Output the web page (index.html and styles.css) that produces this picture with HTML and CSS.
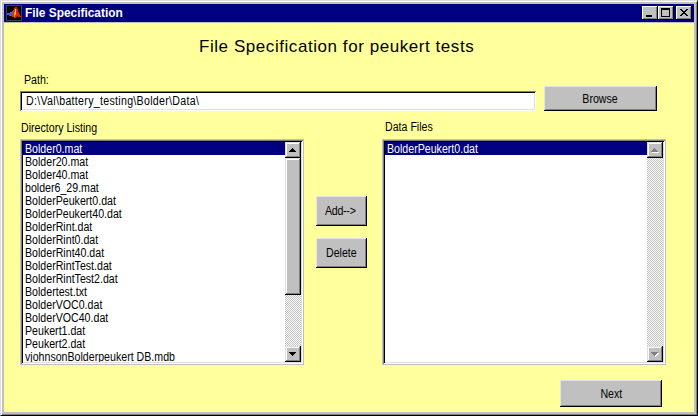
FILE: index.html
```html
<!DOCTYPE html>
<html lang="en">
<head>
<meta charset="utf-8">
<title>File Specification</title>
<link rel="stylesheet" href="styles.css">
</head>
<body>
<div class="window">
  <header class="titlebar">
    <svg class="app-icon" width="16" height="16" viewBox="0 0 16 16" shape-rendering="crispEdges">
      <rect width="16" height="16" fill="#000"/>
      <path d="M.5.5h15v15H.5z" fill="none" stroke="#404040"/>
      <path d="M1 8h3V7h2v3H5v1H3v-1H1z" fill="#4060d8"/>
      <path d="M5 7h1V6h1V5h1V3h1v5H8v2H7v1H5z" fill="#a04070"/>
      <path d="M8 3h1V2h2v2h1v3h1v2h1v2h1v1h-3v-1h-1v1h-1v1H8v-1H6v-1h1V9h1z" fill="#e02000"/>
      <path d="M8 7h1V4h1v6H9v2H8z" fill="#ff9000"/>
      <path d="M9 4h1v5H9z" fill="#ffe040"/>
    </svg>
    <h1 class="title"><span>File Specification</span></h1>
    <div class="controls">
      <div class="ctl"><svg width="16" height="14" shape-rendering="crispEdges"><path d="M4 9h6v2H4z"/></svg></div>
      <div class="ctl"><svg width="16" height="14" shape-rendering="crispEdges"><path fill-rule="evenodd" d="M3 2h9v9H3zM4 4v6h7V4z"/></svg></div>
      <div class="ctl close"><svg width="16" height="14" shape-rendering="crispEdges"><path d="M4 3h2v1h1v1h2V4h1V3h2v1h-1v1h-1v1H9v1h1v1h1v1h1v1h-2V9H9V8H7v1H6v1H4V9h1V8h1V7h1V6H6V5H5V4H4z"/></svg></div>
    </div>
  </header>
  <main class="form">
    <h2 class="heading"><span>File Specification for peukert tests</span></h2>
    <div class="path-row">
      <div class="path-group">
        <div class="label path-label"><span class="txt">Path:</span></div>
        <div class="field"><span class="txt">D:\Val\battery_testing\Bolder\Data\</span></div>
      </div>
      <div class="btn browse"><span class="txt">Browse</span></div>
    </div>
    <div class="lists">
      <section>
        <div class="label dir-label"><span class="txt">Directory Listing</span></div>
        <div class="listbox">
          <ul>
            <li class="selected"><span class="txt">Bolder0.mat</span></li>
            <li><span class="txt">Bolder20.mat</span></li>
            <li><span class="txt">Bolder40.mat</span></li>
            <li><span class="txt">bolder6_29.mat</span></li>
            <li><span class="txt">BolderPeukert0.dat</span></li>
            <li><span class="txt">BolderPeukert40.dat</span></li>
            <li><span class="txt">BolderRint.dat</span></li>
            <li><span class="txt">BolderRint0.dat</span></li>
            <li><span class="txt">BolderRint40.dat</span></li>
            <li><span class="txt">BolderRintTest.dat</span></li>
            <li><span class="txt">BolderRintTest2.dat</span></li>
            <li><span class="txt">Boldertest.txt</span></li>
            <li><span class="txt">BolderVOC0.dat</span></li>
            <li><span class="txt">BolderVOC40.dat</span></li>
            <li><span class="txt">Peukert1.dat</span></li>
            <li><span class="txt">Peukert2.dat</span></li>
            <li><span class="txt">vjohnsonBolderpeukert DB.mdb</span></li>
          </ul>
          <div class="scrollbar">
            <div class="sb"><svg width="16" height="16" shape-rendering="crispEdges"><path d="M7 6h1v1h1v1h1v1h1v1H4V9h1V8h1V7h1z"/></svg></div>
            <div class="sb thumb"></div>
            <div class="sb down"><svg width="16" height="16" shape-rendering="crispEdges"><path d="M4 6h7v1h-1v1H9v1H8v1H7V9H6V8H5V7H4z"/></svg></div>
          </div>
        </div>
      </section>
      <div class="transfer">
        <div class="btn add"><span class="txt">Add--&gt;</span></div>
        <div class="btn"><span class="txt">Delete</span></div>
      </div>
      <section>
        <div class="label data-label"><span class="txt">Data Files</span></div>
        <div class="listbox">
          <ul>
            <li class="selected"><span class="txt">BolderPeukert0.dat</span></li>
          </ul>
          <div class="scrollbar">
            <div class="sb"><svg width="16" height="16" shape-rendering="crispEdges"><path fill="#fff" d="M5 10h7v1H5z"/><path fill="#808080" d="M7 6h1v1h1v1h1v1h1v1H4V9h1V8h1V7h1z"/></svg></div>
            <div class="sb down"><svg width="16" height="16" shape-rendering="crispEdges"><path fill="#fff" d="M5 7h7v1h-1v1h-1v1H9v1H8v-1H7V9H6V8H5z"/><path fill="#808080" d="M4 6h7v1h-1v1H9v1H8v1H7V9H6V8H5V7H4z"/></svg></div>
          </div>
        </div>
      </section>
    </div>
    <div class="btn next"><span class="txt">Next</span></div>
  </main>
</div>
</body>
</html>
```
FILE: styles.css
```css
* { box-sizing: border-box; }
body {
  margin: 0;
  font: 12px/14px "Liberation Sans", sans-serif;
  color: #000;
  overflow: hidden;
}
svg { display: block; }
.window {
  width: 698px;
  height: 416px;
  padding: 3px;
  background: #c0c0c0;
  border: 1px solid;
  border-color: #dfdfdf #000 #000 #dfdfdf;
  box-shadow: inset 1px 1px #fff, inset -1px -1px #808080;
}
.titlebar {
  display: flex;
  height: 18px;
  padding: 1px 2px;
  background: #000080;
}
.title {
  margin: 0 auto 0 3px;
  font-size: 12px;
  line-height: 16px;
  color: #fff;
}
.title span { display: inline-block; transform-origin: 0 0; transform: scaleX(.99); }
.controls { display: flex; padding-top: 1px; }
.ctl {
  width: 16px;
  height: 14px;
  background: #c0c0c0;
  box-shadow: inset -1px -1px #000, inset 1px 1px #fff, inset -2px -2px #808080;
}
.close { margin-left: 2px; }
.form {
  height: 389px;
  margin-top: 1px;
  padding: 0 28px 0 16px;
  background: #ffff9c;
}
.heading {
  margin: 0;
  padding: 13px 0 0 179px;
  font-size: 17px;
  line-height: 22px;
  font-weight: 400;
  letter-spacing: .56px;
}
.heading span { white-space: nowrap; }
.txt {
  display: inline-block;
  white-space: pre;
  transform: scaleX(.885);
  transform-origin: 0 0;
}
.btn .txt { transform-origin: 50% 0; }
.path-row { display: flex; gap: 8px; height: 53px; align-items: flex-end; }
.path-group { width: 516px; }
.path-label { padding: 0 0 4px 4px; }
.field {
  height: 20px;
  padding: 3px 0 0 6px;
  letter-spacing: .34px;
  background: #fff;
  box-shadow: inset 1px 1px #808080, inset -1px -1px #fff, inset 2px 2px #000, inset -2px -2px #dfdfdf;
}
.btn {
  display: flex;
  justify-content: center;
  align-items: center;
  background: #c0c0c0;
  box-shadow: inset -1px -1px #000, inset 1px 1px #e4e4e4, inset -2px -2px #808080;
}
.browse { width: 113px; height: 25px; }
.lists { display: flex; height: 254px; justify-content: space-between; }
.label { height: 18px; }
.dir-label { height: 28px; padding: 10px 0 0 1px; }
.data-label { height: 28px; padding: 9px 0 0 3px; }
.listbox {
  display: flex;
  width: 284px;
  height: 226px;
  border: 1px solid #c0c0c0;
  padding: 2px;
  background: #fff;
  box-shadow: inset 1px 1px #808080, inset -1px -1px #fff, inset 2px 2px #000, inset -2px -2px #dfdfdf;
}
ul { flex: 1; margin: 0; padding: 0; list-style: none; overflow: hidden; }
li { height: 13px; padding-left: 2px; line-height: 15px; }
.selected { background: #000080; color: #fff; }
.scrollbar {
  display: flex;
  flex-direction: column;
  width: 16px;
  background: repeating-conic-gradient(#c0c0c0 0 25%, #fff 0 50%) 0 0 / 2px 2px;
}
.sb {
  width: 16px;
  height: 16px;
  background: #c0c0c0;
  box-shadow: inset -1px -1px #000, inset 1px 1px #dfdfdf, inset -2px -2px #808080, inset 2px 2px #fff;
}
.thumb { height: 137px; }
.down { margin-top: auto; }
.transfer { display: flex; flex-direction: column; gap: 12px; padding-top: 85px; margin-right: 3px; }
.transfer .btn { width: 51px; height: 30px; }
.add { padding-right: 2px; letter-spacing: -.3px; }
.next { width: 102px; height: 27px; margin: 15px 4px 0 auto; }
```
